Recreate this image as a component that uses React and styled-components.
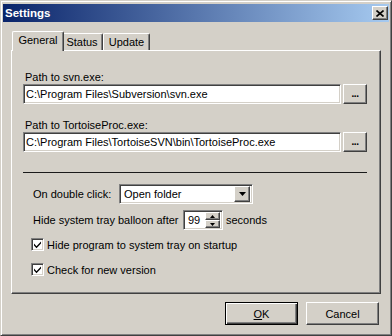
import React from "react";
import styled, { createGlobalStyle } from "styled-components";

const Global = createGlobalStyle`
    html, body {
        margin: 0;
        padding: 0;
        background: #D4D0C8;
    }
    * {
        box-sizing: border-box;
    }
`;

const FONT = `"Liberation Sans", Arial, sans-serif`;

export default function App() {
    return (
        <>
            <Global />
            <Window>
                <TitleBar>
                    <Title>Settings</Title>
                    <CloseButton>
                        <svg width="8" height="7" viewBox="0 0 8 7">
                            <path d="M0.5 0.5 L7.5 6.5 M7.5 0.5 L0.5 6.5" stroke="#000" strokeWidth="1.6" />
                        </svg>
                    </CloseButton>
                </TitleBar>
                <Body>
                    <Tabs>
                        <Tab selected width={52}>General</Tab>
                        <Tab width={42} style={{ marginLeft: -1 }}>Status</Tab>
                        <Tab width={47}>Update</Tab>
                    </Tabs>
                    <Panel>
                        <FieldLabel>Path to svn.exe:</FieldLabel>
                        <PathRow>
                            <TextField readOnly value={"C:\\Program Files\\Subversion\\svn.exe"} />
                            <DotsButton>...</DotsButton>
                        </PathRow>
                        <FieldLabel gap={15}>Path to TortoiseProc.exe:</FieldLabel>
                        <PathRow>
                            <TextField readOnly value={"C:\\Program Files\\TortoiseSVN\\bin\\TortoiseProc.exe"} />
                            <DotsButton>...</DotsButton>
                        </PathRow>
                        <Separator />
                        <OptionRow gap={11}>
                            <RowLabel width={86}>On double click:</RowLabel>
                            <Combo>
                                <ComboText>Open folder</ComboText>
                                <DropButton>
                                    <svg width="7" height="4" viewBox="0 0 7 4">
                                        <path d="M0 0 H7 L3.5 4 Z" fill="#000" />
                                    </svg>
                                </DropButton>
                            </Combo>
                        </OptionRow>
                        <OptionRow gap={6}>
                            <RowLabel width={150}>Hide system tray balloon after</RowLabel>
                            <Spin>
                                <SpinText>99</SpinText>
                                <SpinButtons>
                                    <SpinButton>
                                        <svg width="5" height="3" viewBox="0 0 5 3">
                                            <path d="M0 3 H5 L2.5 0 Z" fill="#000" />
                                        </svg>
                                    </SpinButton>
                                    <SpinButton>
                                        <svg width="5" height="3" viewBox="0 0 5 3">
                                            <path d="M0 0 H5 L2.5 3 Z" fill="#000" />
                                        </svg>
                                    </SpinButton>
                                </SpinButtons>
                            </Spin>
                            <Suffix>seconds</Suffix>
                        </OptionRow>
                        <CheckRow gap={6}>
                            <CheckBox>
                                <CheckMark />
                            </CheckBox>
                            <CheckLabel>Hide program to system tray on startup</CheckLabel>
                        </CheckRow>
                        <CheckRow gap={8}>
                            <CheckBox>
                                <CheckMark />
                            </CheckBox>
                            <CheckLabel>Check for new version</CheckLabel>
                        </CheckRow>
                    </Panel>
                    <Footer>
                        <PushButton isDefault><u>O</u>K</PushButton>
                        <PushButton>Cancel</PushButton>
                    </Footer>
                </Body>
            </Window>
        </>
    );
}

function CheckMark() {
    return (
        <svg width="9" height="9" viewBox="0 0 9 9">
            <path d="M1 3.6 L3.5 6.2 L8 1.6 V3.6 L3.5 8.2 L1 5.6 Z" fill="#000" />
        </svg>
    );
}

const Window = styled.div`
    width: 392px;
    height: 336px;
    display: flex;
    flex-direction: column;
    background: #D4D0C8;
    border: 1px solid;
    border-color: #D4D0C8 #404040 #404040 #D4D0C8;
    box-shadow: inset 1px 1px #FFFFFF, inset -1px -1px #808080;
    padding: 3px 2px 2px 2px;
    font-family: ${FONT};
    font-size: 11px;
    color: #000;
`;
const TitleBar = styled.div`
    height: 18px;
    display: flex;
    align-items: center;
    justify-content: space-between;
    padding: 0 1px 0 2px;
    background: linear-gradient(to right, #0A246A, #A6CAF0);
`;
const Title = styled.span`
    color: #FFFFFF;
    font-weight: bold;
    font-size: 11.5px;
    line-height: 14px;
`;
const CloseButton = styled.div`
    width: 16px;
    height: 14px;
    display: flex;
    align-items: center;
    justify-content: center;
    background: #D4D0C8;
    border: 1px solid;
    border-color: #FFFFFF #404040 #404040 #FFFFFF;
    box-shadow: inset -1px -1px #808080;
`;
const Body = styled.div`
    flex: 1;
    display: flex;
    flex-direction: column;
    padding: 9px 8px 0 8px;
`;
const Tabs = styled.div`
    display: flex;
    align-items: flex-end;
    padding-left: 1px;
    margin-bottom: -1px;
    position: relative;
    z-index: 1;
`;
const Tab = styled.div`
    width: ${p => p.width}px;
    height: ${p => p.selected ? 20 : 17}px;
    margin-bottom: ${p => p.selected ? 0 : 1}px;
    margin-right: ${p => p.selected ? -2 : 0}px;
    position: relative;
    z-index: ${p => p.selected ? 2 : 1};
    display: flex;
    align-items: center;
    justify-content: center;
    padding-bottom: ${p => p.selected ? 3 : 0}px;
    background: #D4D0C8;
    border-top: 1px solid #FFFFFF;
    border-left: 1px solid #FFFFFF;
    border-right: 1px solid #404040;
    border-radius: 2px 2px 0 0;
    box-shadow: inset -1px 0 #808080;
    line-height: 13px;
`;
const Panel = styled.div`
    width: 370px;
    height: 244px;
    display: flex;
    flex-direction: column;
    padding: 20px 0 0 11px;
    border: 1px solid;
    border-color: #FFFFFF #404040 #404040 #FFFFFF;
    box-shadow: inset -1px -1px #808080;
`;
const FieldLabel = styled.div`
    line-height: 13px;
    margin-left: 2px;
    margin-top: ${p => p.gap || 0}px;
`;
const PathRow = styled.div`
    display: flex;
    gap: 2px;
`;
const sunken = `
    border: 1px solid;
    border-color: #808080 #FFFFFF #FFFFFF #808080;
    box-shadow: inset 1px 1px #404040, inset -1px -1px #D4D0C8;
`;
const raised = `
    border: 1px solid;
    border-color: #FFFFFF #404040 #404040 #FFFFFF;
    box-shadow: inset -1px -1px #808080;
    background: #D4D0C8;
`;
const TextField = styled.input`
    width: 318px;
    height: 20px;
    ${sunken}
    background: #FFFFFF;
    padding: 0 0 0 2px;
    margin: 0;
    font-family: ${FONT};
    font-size: 11px;
    color: #000;
    outline: none;
`;
const DotsButton = styled.div`
    width: 24px;
    height: 20px;
    ${raised}
    display: flex;
    align-items: center;
    justify-content: center;
    font-weight: bold;
    font-size: 10px;
    line-height: 10px;
    padding-bottom: 1px;
    letter-spacing: -0.5px;
`;
const Separator = styled.div`
    width: 344px;
    height: 1px;
    background: #1A1A1A;
    margin-top: 20px;
`;
const OptionRow = styled.div`
    display: flex;
    align-items: center;
    height: 20px;
    margin-top: ${p => p.gap}px;
    padding-left: 10px;
`;
const RowLabel = styled.span`
    width: ${p => p.width}px;
    flex-shrink: 0;
    white-space: nowrap;
`;
const Combo = styled.div`
    width: 134px;
    height: 20px;
    ${sunken}
    background: #FFFFFF;
    display: flex;
    align-items: center;
    padding: 2px 2px 2px 4px;
`;
const ComboText = styled.span`
    flex: 1;
`;
const DropButton = styled.div`
    width: 16px;
    height: 16px;
    ${raised}
    display: flex;
    align-items: center;
    justify-content: center;
`;
const Spin = styled.div`
    width: 40px;
    height: 20px;
    ${sunken}
    background: #FFFFFF;
    display: flex;
    align-items: center;
    padding: 2px 2px 2px 4px;
`;
const SpinText = styled.span`
    flex: 1;
`;
const SpinButtons = styled.div`
    display: flex;
    flex-direction: column;
`;
const SpinButton = styled.div`
    width: 15px;
    height: 8px;
    ${raised}
    display: flex;
    align-items: center;
    justify-content: center;
`;
const Suffix = styled.span`
    margin-left: 3px;
`;
const CheckRow = styled.div`
    display: flex;
    align-items: center;
    height: 17px;
    margin-top: ${p => p.gap}px;
    padding-left: 8px;
`;
const CheckBox = styled.div`
    width: 13px;
    height: 13px;
    ${sunken}
    background: #FFFFFF;
    display: flex;
    align-items: center;
    justify-content: center;
`;
const CheckLabel = styled.span`
    margin-left: 3px;
`;
const Footer = styled.div`
    display: flex;
    justify-content: flex-end;
    gap: 8px;
    margin-top: 8px;
    padding-right: 2px;
`;
const PushButton = styled.div`
    width: 73px;
    height: 23px;
    display: flex;
    align-items: center;
    justify-content: center;
    background: #D4D0C8;
    border: 1px solid ${p => p.isDefault ? "#000000" : "#FFFFFF"};
    ${p => p.isDefault
        ? `box-shadow: inset 1px 1px #FFFFFF, inset -1px -1px #404040, inset -2px -2px #808080;`
        : `border-color: #FFFFFF #404040 #404040 #FFFFFF; box-shadow: inset -1px -1px #808080;`}
    u {
        text-decoration: underline;
    }
`;
